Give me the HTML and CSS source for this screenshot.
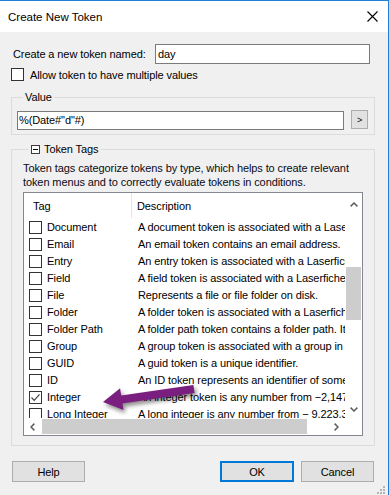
FILE: index.html
```html
<!DOCTYPE html>
<html>
<head>
<meta charset="utf-8">
<link rel="stylesheet" href="styles.css">
</head>
<body>
<div class="window">
  <div class="titlebar">
    <span class="title">Create New Token</span>
    <svg class="close" width="11" height="11" viewBox="0 0 11 11"><path d="M0.5 0.5 L10.5 10.5 M10.5 0.5 L0.5 10.5" stroke="#000" stroke-width="1.1" fill="none"/></svg>
  </div>
  <div class="content">
    <div class="name-row">
      <span class="label">Create a new token named:</span>
      <div class="textbox name-box">day</div>
    </div>
    <div class="check-row">
      <span class="cb"></span>
      <span>Allow token to have multiple values</span>
    </div>
    <fieldset class="group value-group">
      <legend>Value</legend>
      <div class="value-row">
        <div class="textbox value-box">%(Date#"d"#)</div>
        <div class="btn small-btn">&gt;</div>
      </div>
    </fieldset>
    <fieldset class="group tags-group">
      <legend><span class="minus"></span>Token Tags</legend>
      <p class="desc">Token tags categorize tokens by type, which helps to create relevant<br>token menus and to correctly evaluate tokens in conditions.</p>
      <div class="list">
        <div class="list-main">
          <div class="list-header">
            <div class="h-tag">Tag</div>
            <div class="h-desc">Description</div>
          </div>
          <div class="rows">
            <div class="row"><div class="c-tag"><span class="cb"></span>Document</div><div class="c-desc">A document token is associated with a Laserfiche document.</div></div>
            <div class="row"><div class="c-tag"><span class="cb"></span>Email</div><div class="c-desc">An email token contains an email address.</div></div>
            <div class="row"><div class="c-tag"><span class="cb"></span>Entry</div><div class="c-desc">An entry token is associated with a Laserfiche entry.</div></div>
            <div class="row"><div class="c-tag"><span class="cb"></span>Field</div><div class="c-desc">A field token is associated with a Laserfiche field.</div></div>
            <div class="row"><div class="c-tag"><span class="cb"></span>File</div><div class="c-desc">Represents a file or file folder on disk.</div></div>
            <div class="row"><div class="c-tag"><span class="cb"></span>Folder</div><div class="c-desc">A folder token is associated with a Laserfiche folder.</div></div>
            <div class="row"><div class="c-tag"><span class="cb"></span>Folder Path</div><div class="c-desc">A folder path token contains a folder path. It may be relative.</div></div>
            <div class="row"><div class="c-tag"><span class="cb"></span>Group</div><div class="c-desc">A group token is associated with a group in a directory.</div></div>
            <div class="row"><div class="c-tag"><span class="cb"></span>GUID</div><div class="c-desc">A guid token is a unique identifier.</div></div>
            <div class="row"><div class="c-tag"><span class="cb"></span>ID</div><div class="c-desc">An ID token represents an identifier of some kind.</div></div>
            <div class="row"><div class="c-tag"><span class="cb checked"><svg width="11" height="11" viewBox="0 0 11 11"><path d="M1.5 5.5 L4.2 8.3 L9.5 2.3" stroke="#444" stroke-width="1.2" fill="none"/></svg></span>Integer</div><div class="c-desc">An integer token is any number from −2,147,483,648 to 2,147,483,647.</div></div>
            <div class="row"><div class="c-tag"><span class="cb"></span>Long Integer</div><div class="c-desc">A long integer is any number from − 9,223,372,036,854,775,808.</div></div>
          </div>
        </div>
        <div class="vscroll">
          <div class="sb-btn"><svg width="8" height="5" viewBox="0 0 8 5"><polyline points="0.6,4.4 4,1 7.4,4.4" stroke="#606060" stroke-width="1.5" fill="none"/></svg></div>
          <div class="v-track"><div class="v-thumb"></div></div>
          <div class="sb-btn"><svg width="8" height="5" viewBox="0 0 8 5"><polyline points="0.6,0.6 4,4 7.4,0.6" stroke="#606060" stroke-width="1.5" fill="none"/></svg></div>
        </div>
        <div class="hscroll">
          <div class="sb-btn"><svg width="5" height="8" viewBox="0 0 5 8"><polyline points="4.4,0.6 1,4 4.4,7.4" stroke="#606060" stroke-width="1.5" fill="none"/></svg></div>
          <div class="h-track"><div class="h-thumb"></div></div>
          <div class="sb-btn"><svg width="5" height="8" viewBox="0 0 5 8"><polyline points="0.6,0.6 4,4 0.6,7.4" stroke="#606060" stroke-width="1.5" fill="none"/></svg></div>
        </div>
        <div class="corner"></div>
      </div>
    </fieldset>
    <div class="buttons">
      <div class="btn help-btn">Help</div>
      <div class="btn ok-btn">OK</div>
      <div class="btn cancel-btn">Cancel</div>
    </div>
  </div>
  <svg class="arrow" width="110" height="45" viewBox="0 0 110 45">
    <line x1="99" y1="14" x2="25" y2="24.8" stroke="#7a1f7f" stroke-width="8"/>
    <polygon points="8,27 25.1,13.2 28.5,35" fill="#7a1f7f"/>
  </svg>
  <svg class="grip" width="10" height="9" viewBox="0 0 10 9">
    <rect x="7" y="1" width="2" height="2" fill="#b5b5b5"/>
    <rect x="4" y="4" width="2" height="2" fill="#b5b5b5"/>
    <rect x="7" y="4" width="2" height="2" fill="#b5b5b5"/>
    <rect x="1" y="7" width="2" height="2" fill="#b5b5b5"/>
    <rect x="4" y="7" width="2" height="2" fill="#b5b5b5"/>
    <rect x="7" y="7" width="2" height="2" fill="#b5b5b5"/>
  </svg>
</div>
</body>
</html>
```
FILE: styles.css
```css
* { box-sizing: border-box; }
html, body { margin: 0; padding: 0; }
body {
  font-family: "Liberation Sans", Arial, sans-serif;
  font-size: 11px;
  letter-spacing: -0.1px;
  color: #000;
  background: #f0f0f0;
}
.window {
  position: relative;
  width: 389px;
  height: 495px;
  border-top: 1px solid #1f7fd6;
  border-right: 1px solid #1f7fd6;
  background: #f0f0f0;
  overflow: hidden;
}
.titlebar {
  height: 31px;
  background: #fff;
  display: flex;
  align-items: center;
  justify-content: space-between;
  padding: 0 10px 0 8px;
}
.title { font-size: 11.5px; padding-top: 1px; letter-spacing: 0; }
.close { display: block; }
.content {
  padding: 12px 13px 0 11px;
}
.name-row {
  display: flex;
  align-items: center;
  height: 20px;
}
.label { margin-left: 2px; }
.textbox {
  background: #fff;
  border: 1px solid #7a7a7a;
  white-space: nowrap;
  overflow: hidden;
}
.name-box {
  margin-left: auto;
  margin-right: 5px;
  width: 215px;
  height: 20px;
  line-height: 18px;
  padding-left: 2px;
}
.check-row {
  display: flex;
  align-items: center;
  gap: 6px;
  margin-top: 4px;
  height: 13px;
}
.cb {
  display: inline-flex;
  align-items: center;
  justify-content: center;
  width: 13px;
  height: 13px;
  border: 1px solid #333;
  background: #fff;
  flex: none;
}
.cb svg { display: block; }
.group {
  margin: 0;
  padding: 0;
  min-width: 0;
  border: 1px solid #dcdcdc;
  width: 364px;
}
.group legend {
  margin-left: 6px;
  padding: 0 2px;
  line-height: 13px;
  height: 13px;
  display: flex;
  align-items: center;
}
.value-group { margin-top: 10px; padding: 6px 6px 4px 5px; }
.value-row {
  display: flex;
  justify-content: space-between;
  align-items: flex-start;
  height: 20px;
}
.value-box {
  margin-top: 1px;
  width: 327px;
  height: 19px;
  line-height: 17px;
  padding-left: 1px;
}
.btn {
  background: #e1e1e1;
  border: 1px solid #adadad;
  display: flex;
  align-items: center;
  justify-content: center;
}
.small-btn {
  width: 17px;
  height: 19px;
  font-size: 9px;
}
.tags-group { margin-top: 8px; padding: 5px 11px 9px 11px; }
.minus {
  position: relative;
  width: 9px;
  height: 9px;
  border: 1px solid #3c3c3c;
  margin-right: 4px;
  background: #fff;
}
.minus::after {
  content: "";
  position: absolute;
  left: 1px;
  right: 1px;
  top: 3px;
  height: 1px;
  background: #000;
}
.desc {
  margin: 0;
  line-height: 14px;
  white-space: nowrap;
  color: #0a0a14;
}
.list {
  margin-top: 3px;
  width: 340px;
  height: 244px;
  border: 1px solid #828790;
  background: #fff;
  display: grid;
  grid-template-columns: 1fr 17px;
  grid-template-rows: 1fr 17px;
}
.list-main { overflow: hidden; min-width: 0; }
.list-header {
  display: flex;
  height: 25px;
  align-items: stretch;
}
.h-tag {
  width: 108px;
  padding-left: 9px;
  border-right: 1px solid #e5e5e5;
  display: flex;
  align-items: center;
  flex: none;
}
.h-desc {
  padding-left: 5px;
  display: flex;
  align-items: center;
}
.rows { white-space: nowrap; }
.row {
  display: flex;
  height: 17px;
  align-items: center;
}
.c-tag {
  width: 108px;
  flex: none;
  display: flex;
  align-items: center;
  gap: 5px;
  padding-left: 5px;
}
.c-tag .cb { margin-top: 2px; }
.c-desc { padding-left: 6px; }
.vscroll {
  display: flex;
  flex-direction: column;
  padding-top: 3px;
}
.sb-btn {
  width: 17px;
  height: 17px;
  display: flex;
  align-items: center;
  justify-content: center;
  flex: none;
}
.sb-btn svg { display: block; }
.v-track { flex: 1; padding: 0 1px; }
.v-thumb {
  margin-top: 54px;
  height: 53px;
  background: #cdcdcd;
}
.hscroll { display: flex; }
.h-track { flex: 1; padding: 1px 0; }
.h-thumb {
  margin-left: 1px;
  width: 265px;
  height: 15px;
  background: #cdcdcd;
}
.corner { background: #fff; }
.buttons {
  display: flex;
  margin-top: 15px;
  height: 21px;
  padding: 0 1px;
}
.buttons .btn { width: 73px; height: 21px; }
.ok-btn {
  margin-left: auto;
  margin-right: 7px;
  border: 2px solid #0078d7;
  width: 74px !important;
}
.arrow {
  position: absolute;
  left: 95px;
  top: 374px;
  filter: drop-shadow(2px 3px 2px rgba(0, 0, 0, 0.45));
}
.grip {
  position: absolute;
  right: 2px;
  bottom: 1px;
}
```
